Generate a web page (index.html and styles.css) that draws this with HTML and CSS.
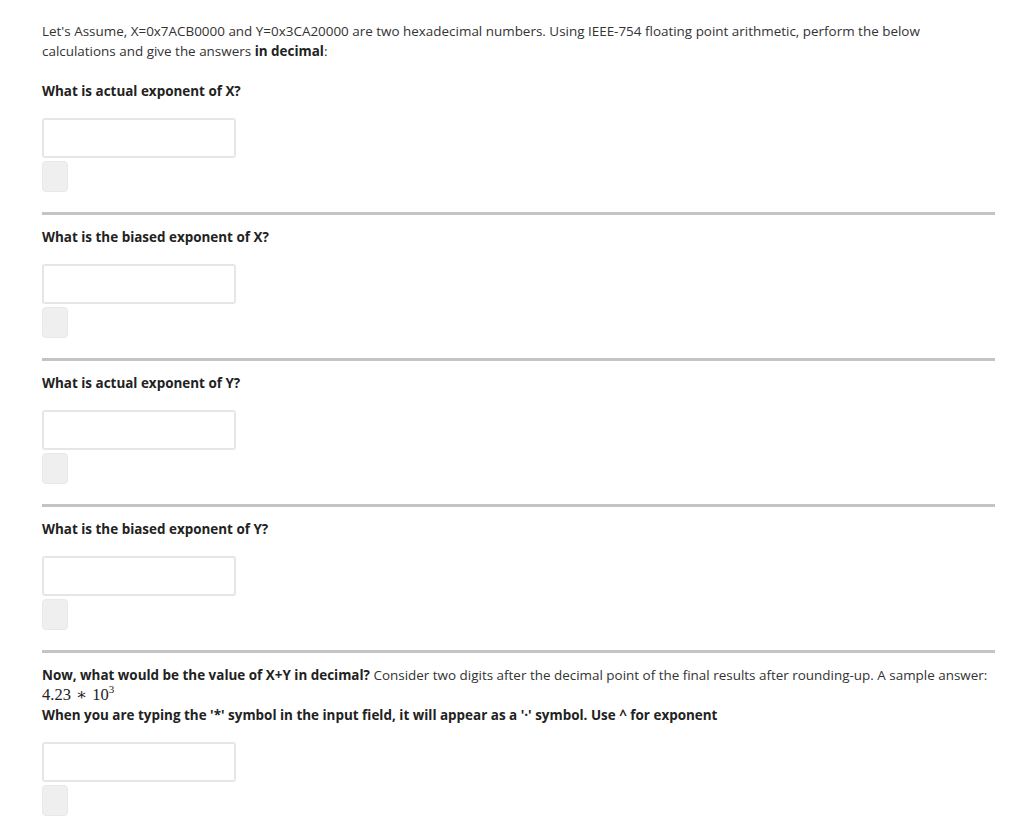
FILE: index.html
```html
<!DOCTYPE html>
<html>
<head>
<meta charset="utf-8">
<link rel="stylesheet" href="styles.css">
</head>
<body>
<div class="page">
  <p class="intro">Let's Assume, X=0x7ACB0000 and Y=0x3CA20000 are two hexadecimal numbers. Using IEEE-754 floating point arithmetic, perform the below calculations and give the answers <strong>in decimal</strong>:</p>

  <section class="q">
    <p class="title"><strong>What is actual exponent of X?</strong></p>
    <input class="answer" type="text">
    <button class="check" type="button"></button>
  </section>
  <hr class="sep">

  <section class="q">
    <p class="title"><strong>What is the biased exponent of X?</strong></p>
    <input class="answer" type="text">
    <button class="check" type="button"></button>
  </section>
  <hr class="sep">

  <section class="q">
    <p class="title"><strong>What is actual exponent of Y?</strong></p>
    <input class="answer" type="text">
    <button class="check" type="button"></button>
  </section>
  <hr class="sep">

  <section class="q">
    <p class="title"><strong>What is the biased exponent of Y?</strong></p>
    <input class="answer" type="text">
    <button class="check" type="button"></button>
  </section>
  <hr class="sep">

  <section class="q">
    <p class="title"><strong>Now, what would be the value of X+Y in decimal?</strong> Consider two digits after the decimal point of the final results after rounding-up. A sample answer:<br><span class="math">4.23 <span class="op">∗</span> 10<sup>3</sup></span><br><strong>When you are typing the '*' symbol in the input field, it will appear as a '·' symbol. Use ^ for exponent</strong></p>
    <input class="answer" type="text">
    <button class="check" type="button"></button>
  </section>
</div>
</body>
</html>
```

FILE: styles.css
```css
html, body {
  margin: 0;
  padding: 0;
  background: #fff;
}
.page {
  padding: 21px 29px 0 42px;
  font-family: "Open Sans", "Noto Sans", sans-serif;
  font-size: 13.45px;
  line-height: 20px;
  color: #333;
}
p {
  margin: 0;
}
strong {
  font-weight: 700;
  color: #222;
}
.intro {
  margin-bottom: 20px;
  padding-right: 60px;
}
.q {
  display: flex;
  flex-direction: column;
  align-items: flex-start;
}
.title {
  margin-bottom: 17px;
}
.answer {
  box-sizing: border-box;
  width: 194px;
  height: 40px;
  border: 2px solid #e6e6e6;
  border-radius: 3px;
  background: #fff;
  margin: 0;
}
.check {
  box-sizing: border-box;
  width: 26px;
  height: 31px;
  margin: 3px 0 0 0;
  border: 1px solid #e8e8e8;
  border-radius: 4px;
  background: #efefef;
  padding: 0;
}
.sep {
  border: 0;
  height: 3px;
  background: #c4c4c4;
  margin: 20px 0 12px 0;
}
.math {
  font-family: "Liberation Serif", "DejaVu Serif", serif;
  font-size: 16.5px;
  color: #222;
  line-height: 18px;
}
.math .op {
  padding: 0 1px;
}
.math sup {
  font-size: 11px;
  line-height: 0;
  vertical-align: 7px;
}
```
